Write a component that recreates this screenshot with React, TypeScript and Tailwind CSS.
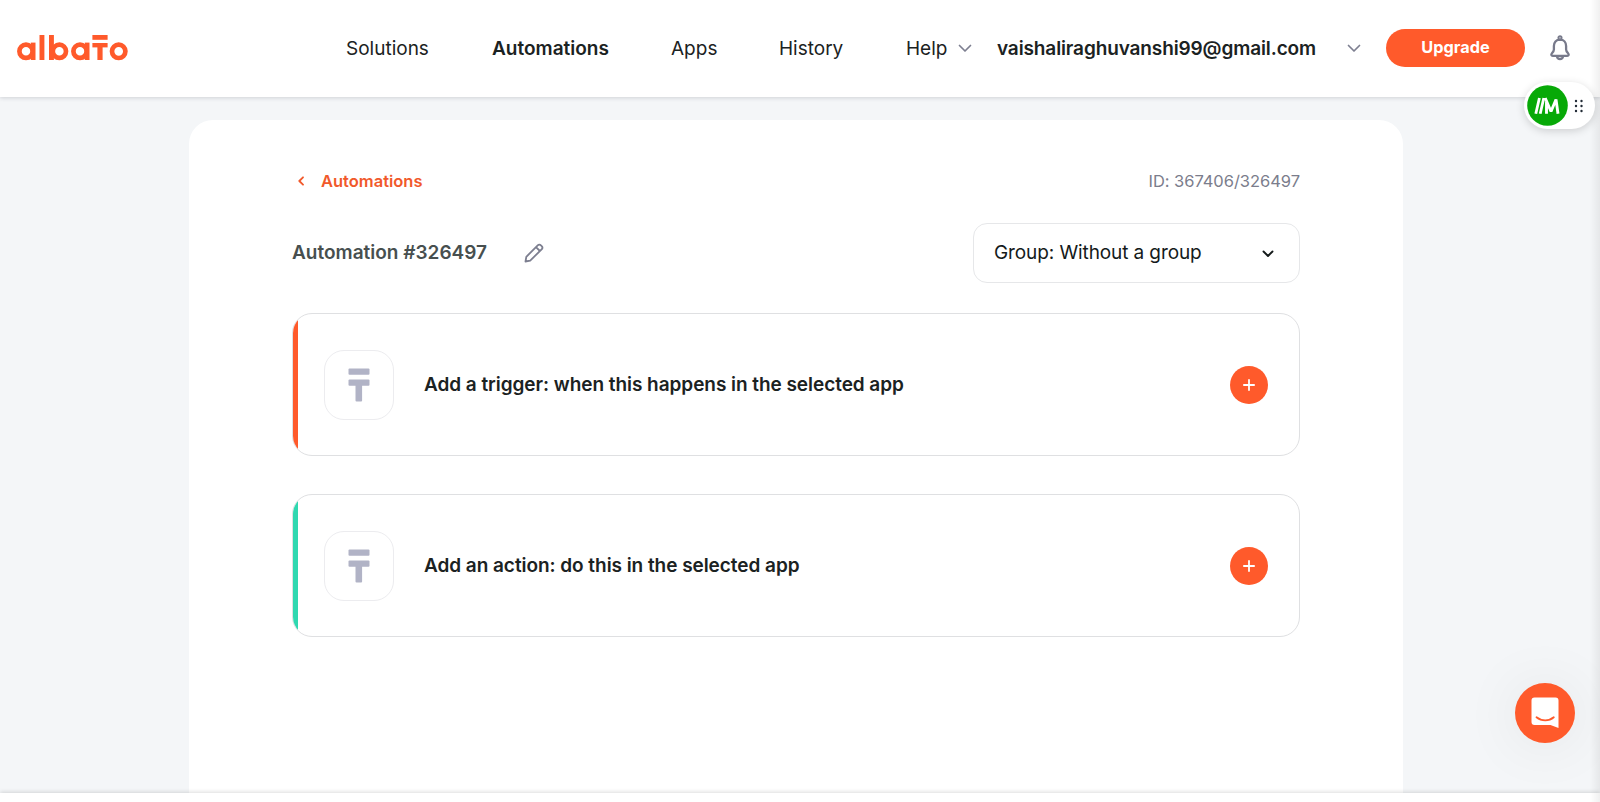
import React from "react";

type Step = {
  id: string;
  label: string;
  accent: string;
  spacing: string;
};

const steps: Step[] = [
  {
    id: "trigger",
    label: "Add a trigger: when this happens in the selected app",
    accent: "bg-[#ff5a2b]",
    spacing: "mt-[30px]",
  },
  {
    id: "action",
    label: "Add an action: do this in the selected app",
    accent: "bg-[#2fd8b0]",
    spacing: "mt-[38px]",
  },
];

function Logo() {
  return (
    <svg
      width="112"
      height="26"
      viewBox="0 0 112 26"
      className="shrink-0 text-[#ff5a2b]"
      role="img"
      aria-label="albato"
    >
      <g fill="none" stroke="currentColor" strokeWidth="4.7">
        <circle cx="9" cy="16.3" r="6.6" />
        <circle cx="42.4" cy="16.3" r="6.6" />
        <circle cx="63" cy="16.3" r="6.6" />
        <circle cx="101.7" cy="16.3" r="6.7" />
      </g>
      <g fill="currentColor">
        <rect x="13.8" y="7.6" width="4.7" height="17.4" />
        <rect x="22.5" y="0" width="4.9" height="25" />
        <rect x="32" y="0" width="4.9" height="25" />
        <rect x="67.8" y="7.6" width="4.7" height="17.4" />
        <rect x="75.4" y="0" width="15.2" height="4.8" />
        <rect x="75.4" y="8" width="15.2" height="4.4" />
        <rect x="80.4" y="8" width="5.2" height="17" />
      </g>
    </svg>
  );
}

function Chevron({ className }: { className: string }) {
  return (
    <svg width="14" height="9" viewBox="0 0 14 9" fill="none" className={className}>
      <path
        d="M1.5 1.5 7 7l5.5-5.5"
        stroke="currentColor"
        strokeWidth="1.7"
        strokeLinecap="round"
        strokeLinejoin="round"
      />
    </svg>
  );
}

function BellIcon() {
  return (
    <svg width="22" height="26" viewBox="0 0 22 26" fill="none" stroke="#787a8b" strokeWidth="2.3">
      <circle cx="11" cy="2.8" r="1.6" strokeWidth="1.9" />
      <path
        d="M11 4.6c-3.9 0-6.1 2.8-6.1 6.4v3.6c0 1.6-.7 2.5-1.9 3.6-1.2 1.2-.8 2.6.8 2.6h14.4c1.6 0 2-1.4.8-2.6-1.2-1.1-1.9-2-1.9-3.6V11c0-3.6-2.2-6.4-6.1-6.4Z"
        strokeLinejoin="round"
      />
      <path d="M8 21.5c.3 1.7 1.5 2.5 3 2.5s2.7-.8 3-2.5" />
    </svg>
  );
}

function PencilIcon() {
  return (
    <svg
      width="20"
      height="20"
      viewBox="0 0 20 20"
      fill="none"
      stroke="#7d7f90"
      strokeWidth="1.8"
      strokeLinejoin="round"
    >
      <path d="M1.5 18.5 2.3 13.8 13.7 2.4c1-1 2.3-1 3.2-.1l.8.8c.9.9.9 2.2-.1 3.2L6.2 17.7Z" />
      <path d="m12 4.1 3.9 3.9" />
    </svg>
  );
}

function StepCard({ step }: { step: Step }) {
  return (
    <div
      className={`${step.spacing} flex h-[143px] overflow-hidden rounded-[20px] border border-[#dfe0e2] bg-white`}
    >
      <div className={`w-[5px] shrink-0 ${step.accent}`} />
      <div className="flex flex-1 items-center pr-[31px] pl-[25.5px]">
        <div className="flex size-[70px] items-center justify-center rounded-[20px] border border-[#ececef]">
          <svg width="22" height="34" viewBox="0 0 22 34" fill="#b1b3c6">
            <rect x="0.5" y="0.5" width="21" height="6.2" rx="1" />
            <rect x="0.5" y="11.5" width="21" height="6.2" rx="1" />
            <rect x="7.5" y="12" width="6.6" height="21.5" rx="1" />
          </svg>
        </div>
        <p className="ml-[30.5px] pt-px text-[19px] leading-6 font-semibold tracking-[-0.05px] text-[#1b2222]">
          {step.label}
        </p>
        <button className="ml-auto flex size-[38px] items-center justify-center rounded-full bg-[#ff5a2b]">
          <svg width="12" height="12" viewBox="0 0 12 12" stroke="white" strokeWidth="1.8" strokeLinecap="round">
            <path d="M6 .9v10.2M.9 6h10.2" />
          </svg>
        </button>
      </div>
    </div>
  );
}

function Header() {
  return (
    <header className="relative z-10 flex h-[97px] shrink-0 items-center bg-white pb-px pl-[17px] text-[19px] text-[#1b2222] shadow-[0_1px_4px_rgba(40,45,60,0.18)]">
      <Logo />
      <nav className="ml-[217px] flex items-center pt-[2px] whitespace-nowrap">
        <a className="w-[146px]">Solutions</a>
        <a className="w-[179px] font-semibold">Automations</a>
        <a className="w-[108px]">Apps</a>
        <a className="w-[127px]">History</a>
        <a className="flex w-[91px] items-center">
          <span className="w-[52px]">Help</span>
          <Chevron className="mb-[2px] text-[#7d7f90]" />
        </a>
        <a className="flex w-[389px] items-center font-semibold">
          <span className="w-[350px] tracking-[-0.12px]">vaishaliraghuvanshi99@gmail.com</span>
          <Chevron className="mb-[2px] text-[#7d7f90]" />
        </a>
      </nav>
      <button className="flex h-[38px] w-[139px] shrink-0 items-center justify-center rounded-full bg-[#ff5a2b] pb-px text-[16.3px] font-bold text-white">
        Upgrade
      </button>
      <button className="ml-[24px]">
        <BellIcon />
      </button>
    </header>
  );
}

export default function App() {
  return (
    <div className="relative flex h-[802px] w-[1600px] flex-col overflow-hidden bg-[#f4f6f8] font-[Inter,sans-serif]">
      <Header />

      <main className="mt-[23px] ml-[189px] w-[1214px] flex-1 rounded-t-[24px] bg-white px-[103px] pt-[48px]">
        <div className="flex h-[26px] items-center justify-between text-[16.5px]">
          <a className="flex items-center font-semibold text-[#f1592b]">
            <svg width="6" height="10" viewBox="0 0 6 10" fill="none" className="mr-[17px] ml-[6px]">
              <path
                d="M5 1.3 1.3 5 5 8.7"
                stroke="currentColor"
                strokeWidth="1.8"
                strokeLinecap="round"
                strokeLinejoin="round"
              />
            </svg>
            Automations
          </a>
          <span className="text-[16.5px] tracking-[-0.04px] text-[#7b7d8c]">ID: 367406/326497</span>
        </div>

        <div className="mt-[29px] flex h-[60px] items-center">
          <h1 className="w-[232px] pt-px text-[19px] font-semibold whitespace-nowrap text-[#474f4f]">
            Automation #326497
          </h1>
          <PencilIcon />
          <button className="ml-auto flex h-[60px] w-[327px] items-center justify-between rounded-[14px] border border-[#e6e7e9] pr-[25px] pl-[20px] text-[19px] tracking-[-0.1px] text-[#141a1a]">
            <span className="pt-px">Group: Without a group</span>
            <svg width="12" height="8" viewBox="0 0 12 8" fill="none" className="mt-[2px]">
              <path
                d="M1.5 1.5 6 6l4.5-4.5"
                stroke="currentColor"
                strokeWidth="1.9"
                strokeLinecap="round"
                strokeLinejoin="round"
              />
            </svg>
          </button>
        </div>

        {steps.map((step) => (
          <StepCard key={step.id} step={step} />
        ))}
      </main>

      <div className="z-10 h-[9px] shrink-0 bg-white shadow-[0_-1px_4px_rgba(0,0,0,0.14)]" />

      {/* page edge shade */}
      <div className="absolute inset-y-0 right-0 z-10 w-[10px] bg-linear-to-r from-transparent to-black/6" />

      {/* browser extension handle */}
      <div className="absolute top-[82px] right-[5px] z-20 flex h-[47px] w-[71px] items-center rounded-full bg-white pl-[3px] shadow-[0_2px_8px_rgba(0,0,0,0.16)]">
        <svg width="41" height="41" viewBox="0 0 41 41">
          <circle cx="20.5" cy="20.5" r="20.3" fill="#07a907" />
          <g fill="none" stroke="white">
            <path d="M8.8 28.8 12.400 13M13.2 28.8 16.8 13" strokeWidth="2.8" />
            <path d="M18.2 13 L24 26.500 L29 14.500 L31 28.800M19.500 17v11.800" strokeWidth="2.9" strokeLinejoin="bevel" />
          </g>
        </svg>
        <svg width="10" height="14" viewBox="0 0 10 14" fill="#222b36" className="ml-[6px]">
          <circle cx="2" cy="2" r="1.2" />
          <circle cx="7.5" cy="2" r="1.2" />
          <circle cx="2" cy="7" r="1.2" />
          <circle cx="7.5" cy="7" r="1.2" />
          <circle cx="2" cy="12" r="1.2" />
          <circle cx="7.5" cy="12" r="1.2" />
        </svg>
      </div>

      {/* chat launcher */}
      <button className="absolute right-[25px] bottom-[59px] z-20 flex size-[60px] items-center justify-center rounded-full bg-[#ff5a2b] shadow-[0_2px_60px_rgba(0,0,0,0.08)]">
        <svg width="28" height="32" viewBox="0 0 28 32" fill="none">
          <path d="M3.5.5h21a3 3 0 0 1 3 3V31l-8-3h-16a3 3 0 0 1-3-3V3.5a3 3 0 0 1 3-3Z" fill="white" />
          <path d="M5.5 20.3c5 4 12.5 4 17.3 0" stroke="#ff5a2b" strokeWidth="1.8" strokeLinecap="round" />
        </svg>
      </button>
    </div>
  );
}
